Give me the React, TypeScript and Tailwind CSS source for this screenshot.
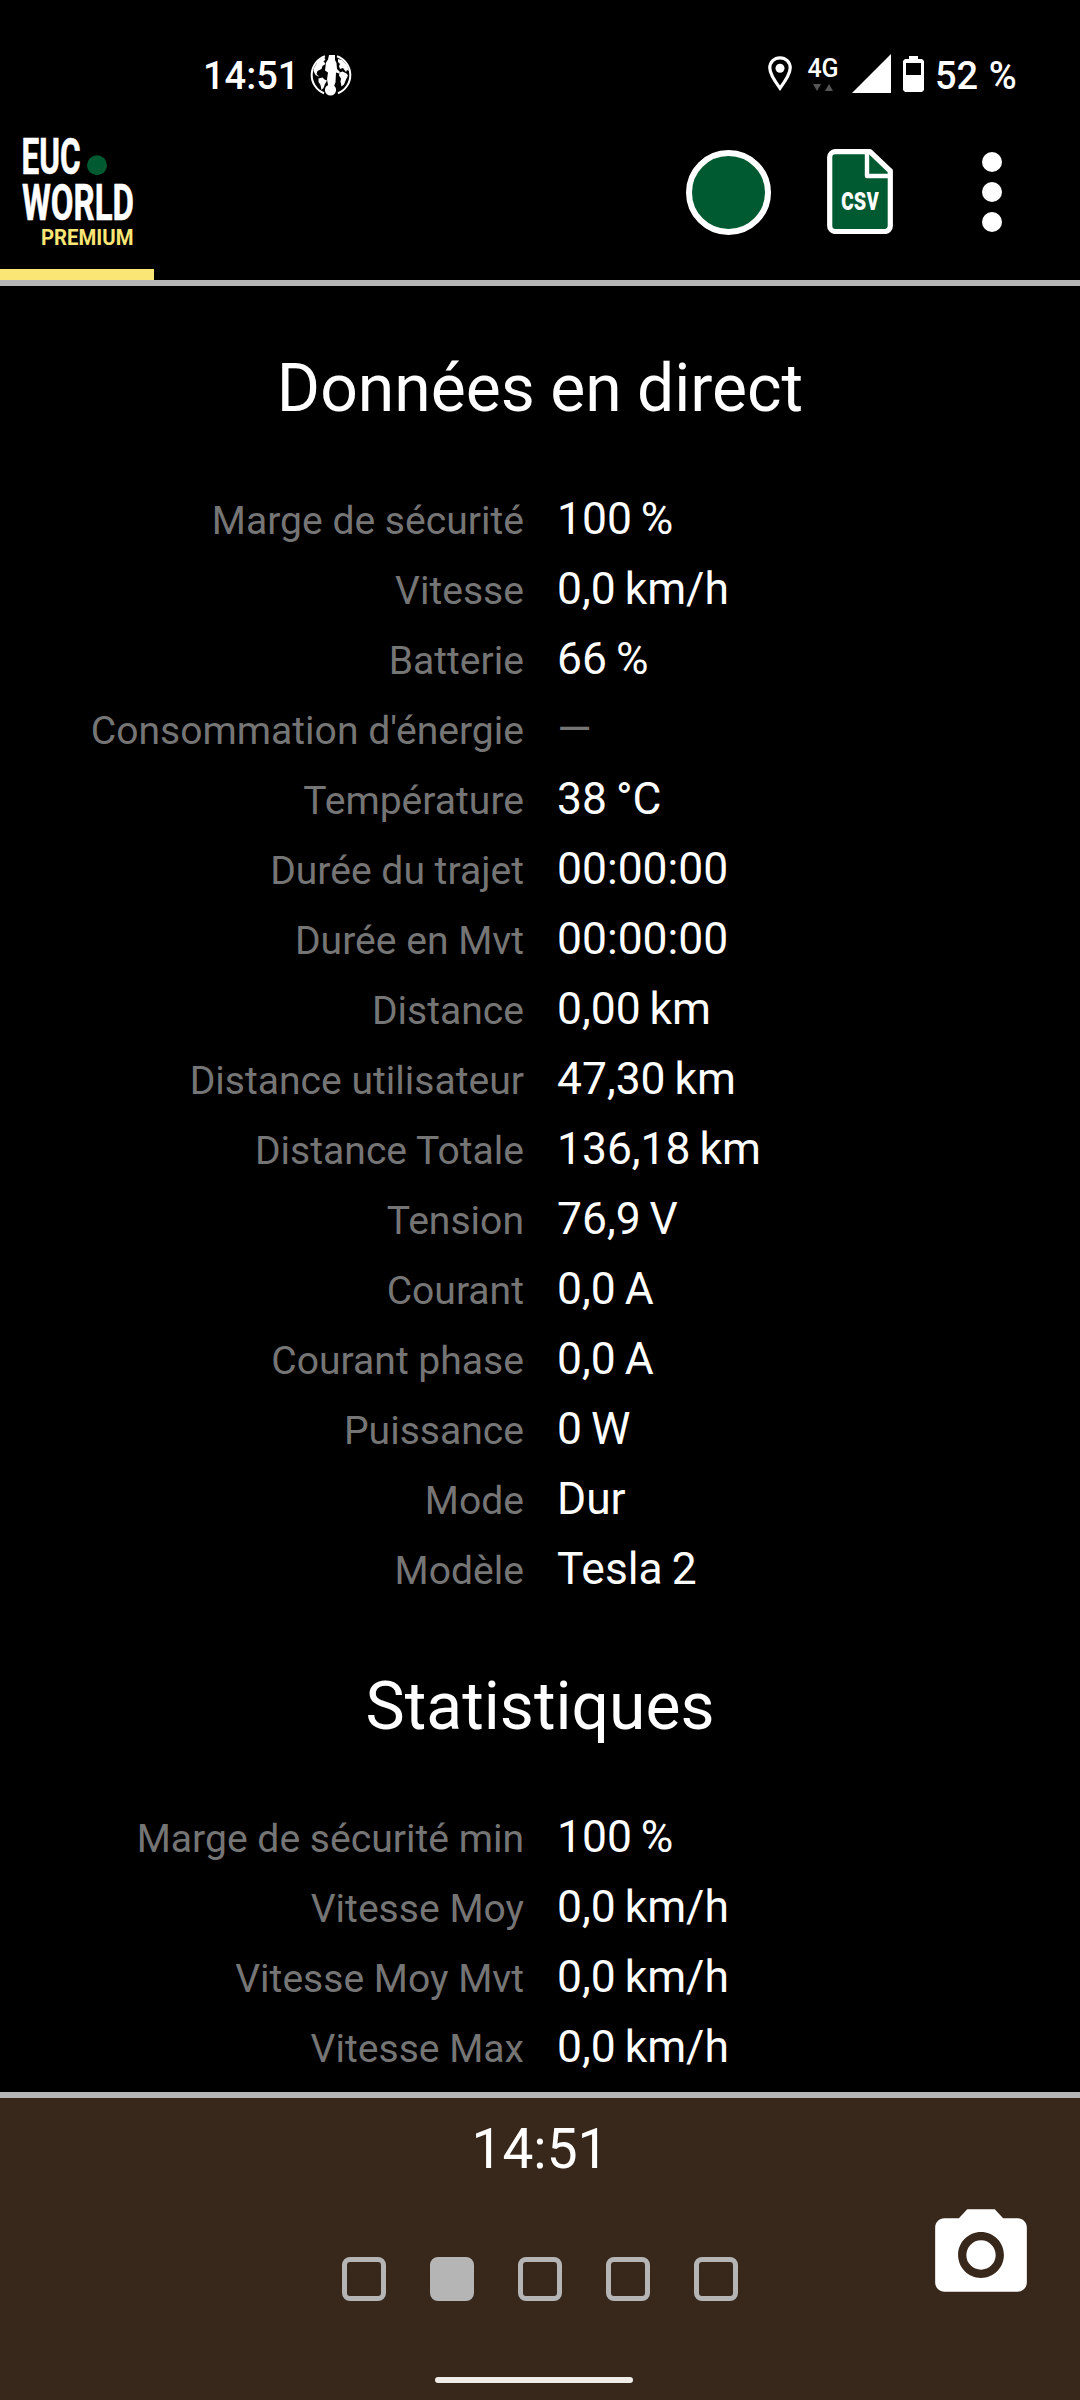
const liveData = [
  { label: "Marge de sécurité", value: "100 %" },
  { label: "Vitesse", value: "0,0 km/h" },
  { label: "Batterie", value: "66 %" },
  { label: "Consommation d'énergie", value: null },
  { label: "Température", value: "38 °C" },
  { label: "Durée du trajet", value: "00:00:00" },
  { label: "Durée en Mvt", value: "00:00:00" },
  { label: "Distance", value: "0,00 km" },
  { label: "Distance utilisateur", value: "47,30 km" },
  { label: "Distance Totale", value: "136,18 km" },
  { label: "Tension", value: "76,9 V" },
  { label: "Courant", value: "0,0 A" },
  { label: "Courant phase", value: "0,0 A" },
  { label: "Puissance", value: "0 W" },
  { label: "Mode", value: "Dur" },
  { label: "Modèle", value: "Tesla 2" },
];

const stats = [
  { label: "Marge de sécurité min", value: "100 %" },
  { label: "Vitesse Moy", value: "0,0 km/h" },
  { label: "Vitesse Moy Mvt", value: "0,0 km/h" },
  { label: "Vitesse Max", value: "0,0 km/h" },
];

type Row = { label: string; value: string | null };

function GlobeIcon() {
  return (
    <svg viewBox="0 0 42 42" className="h-[42px] w-[42px]">
      <path
        d="M14 39.200A19.700 19.700 0 0 1 15 2.300M27 2.300A19.700 19.700 0 0 1 28 39.200"
        fill="none"
        stroke="#fff"
        strokeWidth="2"
      />
      {/* rider */}
      <path
        d="M19 1h6v5l1.500 3 .5 6 3 3-1 1.500-3-1-.5 10-2 5h-5l-1.500-8 1-7-3-2 1-8 2-3z"
        fill="#fff"
      />
      <circle cx="20.500" cy="36" r="5.600" fill="#fff" />
      {/* continents */}
      <path d="M4 14l4-7 6-4 1.500 3-2 1 2 3-3 2-1 3-4 2-1 3 3 3-4-2-2-4z" fill="#fff" />
      <path d="M8.500 24.500l4-1 2 2 2.500 1-2 3.500-1.500 4-2 2-1-5-2-3z" fill="#fff" />
      <path d="M28 5l4 1 5 5 2 6-2-1-1 2-3-4-3 1-1-3 1-2-2-2z" fill="#fff" />
      <path d="M29.500 18.500l3-1 4 2 1.500 2-2 4-2 5-2.500 2-1-5 .5-3-2-3z" fill="#fff" />
    </svg>
  );
}

function StatusBar() {
  return (
    <div className="flex h-[120px] items-start text-[38px] font-medium leading-[45px]">
      <div className="ml-[203px] mt-[54px] w-[107px]">14:51</div>
      <div className="mt-[54px]">
        <GlobeIcon />
      </div>
      <svg viewBox="0 0 24 35" className="ml-[416px] mt-[56px] h-[35px] w-[24px]">
        <path
          d="M12 1.800C6.200 1.800 1.800 6.200 1.800 12c0 6.500 6 14.500 10.200 20.200C16.200 26.500 22.200 18.500 22.200 12 22.200 6.200 17.800 1.800 12 1.800z"
          fill="none"
          stroke="#fff"
          strokeWidth="3.200"
        />
        <circle cx="12" cy="12.300" r="4.500" fill="#fff" />
      </svg>
      <div className="ml-[15px] mt-[55px] flex w-[32px] flex-col items-center">
        <span className="text-[25px] leading-[28px]">4G</span>
        <svg viewBox="0 0 20 8" className="mt-px h-[8px] w-[20px]" fill="#555">
          <path d="M0 0h8L4 7z" />
          <path d="M12 7h8l-4-7z" />
        </svg>
      </div>
      <svg viewBox="0 0 39 39" className="ml-[13px] mt-[54px] h-[39px] w-[39px]">
        <path d="M39 0v39H0z" fill="#fff" />
      </svg>
      <svg viewBox="0 0 21 36" className="ml-[12px] mt-[56px] h-[36px] w-[21px]">
        <path d="M6 0h9v3h4l2 2v29l-2 2H2l-2-2V5l2-2h4z" fill="#fff" />
        <path d="M3 7h15v12H3z" fill="#000" />
      </svg>
      <div className="ml-[11px] mt-[54px] [word-spacing:1px]">52 %</div>
    </div>
  );
}

function Logo() {
  return (
    <svg viewBox="0 0 154 149" className="h-[149px] w-[154px] overflow-visible font-bold">
      <g fill="#fff" stroke="#fff" strokeWidth="0.600" fontSize="49.500">
        <text x="21.500" y="53.600" textLength="59" lengthAdjust="spacingAndGlyphs">
          EUC
        </text>
        <text x="22" y="100.300" textLength="112" lengthAdjust="spacingAndGlyphs">
          WORLD
        </text>
      </g>
      <circle cx="97" cy="45.200" r="10" fill="#005a31" />
      <text x="41" y="125" fontSize="22" textLength="92.500" lengthAdjust="spacingAndGlyphs" fill="#fae674">
        PREMIUM
      </text>
    </svg>
  );
}

function CsvIcon() {
  return (
    <svg viewBox="0 0 66 85" className="h-[85px] w-[66px]">
      <path
        d="M8 2.700H43L63.300 22V77a5.500 5.500 0 0 1-5.500 5.500H8A5.500 5.500 0 0 1 2.700 77V8A5.500 5.500 0 0 1 8 2.700z"
        fill="#005a31"
        stroke="#fff"
        strokeWidth="5.200"
        strokeLinejoin="round"
      />
      <path d="M40 3v24h23" fill="none" stroke="#fff" strokeWidth="4.400" strokeLinejoin="round" />
      <text
        x="14"
        y="60.500"
        fontSize="34"
        fontWeight="700"
        textLength="38"
        lengthAdjust="spacingAndGlyphs"
        fill="#fff"
      >
        csv
      </text>
    </svg>
  );
}

function Header() {
  return (
    <header className="flex h-[166px] justify-between border-b-6 border-[#b5b5b5]">
      <div className="flex w-[154px] flex-col">
        <Logo />
        <div className="h-[11px] bg-[#fae674]" />
      </div>
      <div className="flex pt-[29px]">
        <div className="mt-px h-[85px] w-[85px] rounded-full border-6 border-white bg-[#005a31]" />
        <div className="ml-[56px]">
          <CsvIcon />
        </div>
        <div className="ml-[89px] mr-[78px] mt-[3px] flex flex-col gap-[10px]">
          <span className="h-[20px] w-[20px] rounded-full bg-white" />
          <span className="h-[20px] w-[20px] rounded-full bg-white" />
          <span className="h-[20px] w-[20px] rounded-full bg-white" />
        </div>
      </div>
    </header>
  );
}

function Section({ title, rows }: { title: string; rows: Row[] }) {
  return (
    <section className="pt-16">
      <h2 className="text-center text-[66px] leading-[78px] [word-spacing:-1px]">{title}</h2>
      <dl className="mt-14">
        {rows.map((row) => (
          <div key={row.label} className="grid h-[70px] grid-cols-2 items-baseline gap-8 leading-[70px]">
            <dt className="text-right text-[39.100px] text-[#757575]">{row.label}</dt>
            <dd className="pl-px text-[44.400px] [word-spacing:-2px]">
              {row.value ?? <span className="text-[#757575]">—</span>}
            </dd>
          </div>
        ))}
      </dl>
    </section>
  );
}

function Footer() {
  const pages = [0, 1, 2, 3, 4];

  return (
    <footer className="relative flex h-[308px] flex-col items-center border-t-6 border-[#b5b5b5] bg-[#38271b]">
      <div className="mt-[19px] text-[55px] leading-[64px]">14:51</div>
      <div className="mt-[76px] flex gap-11">
        {pages.map((page) => (
          <span
            key={page}
            className={`h-11 w-11 rounded-lg border-[5px] border-[#b5b5b5] ${page === 1 ? "bg-[#b5b5b5]" : ""}`}
          />
        ))}
      </div>
      <div className="mr-3 mt-[76px] h-[6px] w-[198px] rounded-full bg-[#f0ece8]" />
      <svg viewBox="0 0 24 24" className="absolute right-[44px] top-[102px] h-[110px] w-[110px]" fill="#fff">
        <circle cx="12" cy="12" r="3.200" />
        <path d="M9 2L7.170 4H4c-1.100 0-2 .9-2 2v12c0 1.100.9 2 2 2h16c1.100 0 2-.9 2-2V6c0-1.100-.9-2-2-2h-3.170L15 2H9zm3 15c-2.760 0-5-2.240-5-5s2.240-5 5-5 5 2.240 5 5-2.240 5-5 5z" />
      </svg>
    </footer>
  );
}

export default function App() {
  return (
    <div className="flex h-[2400px] w-[1080px] flex-col overflow-hidden bg-black font-['Roboto',sans-serif] text-white">
      <StatusBar />
      <Header />
      <main className="flex-1 overflow-hidden">
        <Section title="Données en direct" rows={liveData} />
        <Section title="Statistiques" rows={stats} />
      </main>
      <Footer />
    </div>
  );
}
